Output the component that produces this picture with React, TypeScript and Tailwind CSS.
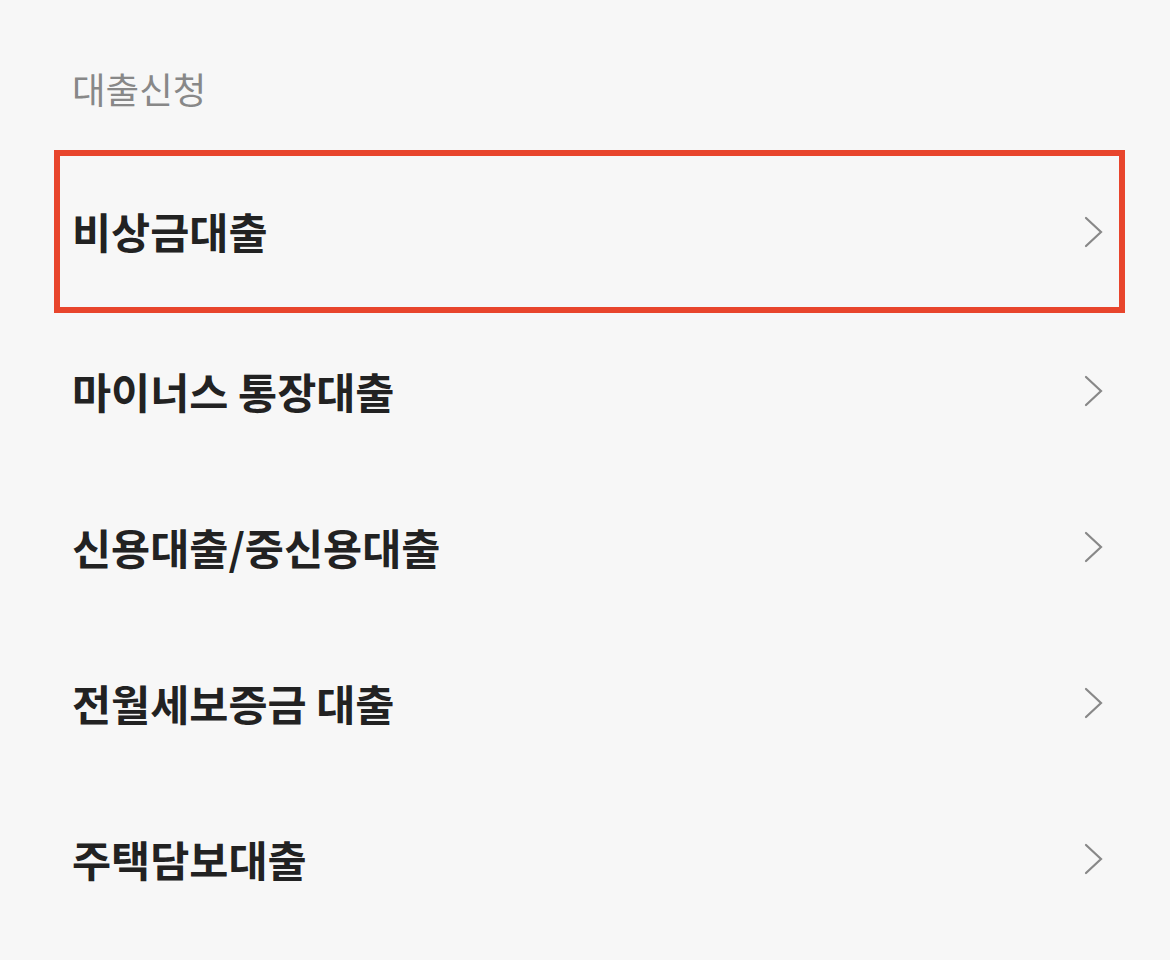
import React from "react";

const items = [
  "비상금대출",
  "마이너스 통장대출",
  "신용대출/중신용대출",
  "전월세보증금 대출",
  "주택담보대출",
];

const Chevron = () => (
  <svg width="19" height="32" viewBox="0 0 19 32" fill="none">
    <polyline
      points="2,2 17,16 2,30"
      stroke="#888888"
      strokeWidth="2.2"
      strokeLinecap="round"
      strokeLinejoin="miter"
    />
  </svg>
);

export default function App() {
  return (
    <div
      className="min-h-screen bg-[#f7f7f7] pl-[54px] pr-[45px] pt-[68px]"
      style={{ fontFamily: '"Noto Sans CJK KR", "Noto Sans", sans-serif' }}
    >
      <div className="pl-[18px] text-[36.5px] leading-[42px] text-[#888888]">
        대출신청
      </div>
      <ul className="mt-[40px]">
        {items.map((label, i) => (
          <li
            key={label}
            className={
              i === 0
                ? "flex h-[163px] items-center justify-between border-[6px] border-[#e8452c] pl-3 pr-4"
                : "flex h-[156px] items-center justify-between border-[6px] border-transparent pl-3 pr-4"
            }
          >
            <span className="text-[42.5px] font-bold leading-none text-[#222222]">
              {label}
            </span>
            <Chevron />
          </li>
        ))}
      </ul>
    </div>
  );
}
